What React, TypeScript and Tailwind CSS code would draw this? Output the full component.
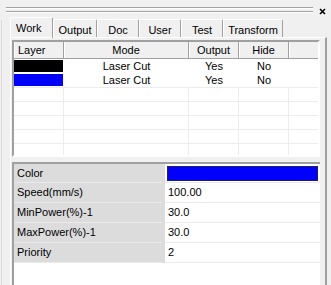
import React from "react";

const tabs: [string, number][] = [
  ["Work", 43],
  ["Output", 44],
  ["Doc", 42],
  ["User", 42],
  ["Test", 42],
  ["Transform", 60],
];

const cols = [50, 125, 50, 50];

function HeaderCell({ w, label, left }: { w: number; label: string; left?: boolean }) {
  return (
    <div
      className={`h-full shrink-0 flex items-center ${left ? "justify-start pl-[4px]" : "justify-center"} border-r border-[#a0a0a0] bg-[#f0f0f0] shadow-[inset_1px_0_0_#ffffff]`}
      style={{ width: w }}
    >
      {label}
    </div>
  );
}

function Row({ swatch, data }: { swatch?: string; data?: boolean }) {
  return (
    <div className={`h-[14px] flex shrink-0 ${data ? "" : "border-b border-[#ececec]"}`}>
      <div className={`shrink-0 ${data ? "" : "border-r border-[#ececec]"} flex items-stretch py-[1px] pr-[1px]`} style={{ width: cols[0] }}>
        {swatch && <div className="w-full" style={{ background: swatch }} />}
      </div>
      <div className={`shrink-0 flex items-center justify-center ${data ? "" : "border-r border-[#ececec]"}`} style={{ width: cols[1] }}>
        {data ? "Laser Cut" : ""}
      </div>
      <div className={`shrink-0 flex items-center justify-center ${data ? "" : "border-r border-[#ececec]"}`} style={{ width: cols[2] }}>
        {data ? "Yes" : ""}
      </div>
      <div className={`shrink-0 flex items-center justify-center ${data ? "" : "border-r border-[#ececec]"}`} style={{ width: cols[3] }}>
        {data ? "No" : ""}
      </div>
      <div className="flex-1" />
    </div>
  );
}

function PropRow({ label, value, color, first }: { label: string; value?: string; color?: string; first?: boolean }) {
  return (
    <div className={`${first ? "h-[19px]" : "h-[20px]"} flex shrink-0`}>
      <div className="w-[148px] shrink-0 bg-[#dcdcdc] border-b border-[#ebebeb] flex items-center pl-[3px]">{label}</div>
      <div className="w-[3px] shrink-0 bg-[#dcdcdc]" />
      <div className={`flex-1 bg-white border-b border-[#ebebeb] flex items-center ${color ? "pl-[2px]" : "pl-[3px]"} pr-[2px]`}>
        {color ? (
          <div className="w-full h-[15px] border border-[#202060]" style={{ background: color }} />
        ) : (
          value
        )}
      </div>
    </div>
  );
}

export default function App() {
  return (
    <div className="w-[331px] h-[285px] bg-[#f0f0f0] overflow-hidden flex flex-col font-['Liberation_Sans',sans-serif] text-[11px] leading-none text-black">
      {/* caption bar */}
      <div className="h-[17px] shrink-0 flex items-start pl-[6px] pr-[5px] pt-[6px] gap-[6px]">
        <div className="flex-1 flex flex-col gap-[2px] pt-[1px]">
          <div className="h-[2px] border-t border-[#a0a0a0] border-b border-b-white" />
          <div className="h-[2px] border-t border-[#a0a0a0] border-b border-b-white" />
        </div>
        <svg width="7" height="7" viewBox="0 0 7 7" className="mt-[2px]">
          <path d="M1 1 L6 6 M6 1 L1 6" stroke="#000" strokeWidth="1.6" />
        </svg>
      </div>
      {/* body */}
      <div className="flex-1 flex min-h-0">
        <div className="w-[10px] shrink-0 flex">
          <div className="w-[1px]" />
          <div className="w-[1px] bg-[#dadada] mt-[3px]" />
        </div>
        <div className="flex-1 flex flex-col min-w-0 pr-[4px]">
          {/* tabs */}
          <div className="h-[20px] shrink-0 flex items-end">
            {tabs.map(([t, w], i) => (
              <div
                key={t}
                className={`shrink-0 flex border-l border-t border-white border-r border-r-[#a0a0a0] rounded-t-[2px] ${
                  i === 0 ? "h-[21px] pt-[5px] relative top-[1px] justify-start pl-[5px]" : "h-[18px] pt-[5px] justify-center"
                }`}
                style={{ width: w }}
              >
                {t}
              </div>
            ))}
          </div>
          {/* panel */}
          <div className="flex-1 flex flex-col border-t border-l border-white border-r-2 border-r-[#a0a0a0] pl-[1px] pr-[5px] pt-[2px] min-h-0">
            {/* list box */}
            <div className="h-[117px] shrink-0 flex flex-col border-2 border-t-[#a0a0a0] border-l-[#a0a0a0] border-r-white border-b-white bg-white overflow-hidden">
              <div className="h-[17px] shrink-0 flex border-b border-[#a0a0a0]">
                <HeaderCell w={cols[0]} label="Layer" left />
                <HeaderCell w={cols[1]} label="Mode" />
                <HeaderCell w={cols[2]} label="Output" />
                <HeaderCell w={cols[3]} label="Hide" />
                <div className="flex-1 bg-[#f0f0f0] shadow-[inset_1px_0_0_#ffffff]" />
              </div>
              <Row swatch="#000000" data />
              <Row swatch="#0000ff" data />
              <div className="h-[1px] shrink-0 border-b border-[#ececec]" />
              <Row />
              <Row />
              <Row />
              <Row />
              <Row />
            </div>
            <div className="h-[5px] shrink-0" />
            {/* property grid */}
            <div className="flex-1 flex flex-col border-t-2 border-l-2 border-[#a0a0a0] bg-white min-h-0">
              <PropRow label="Color" color="#0000ff" first />
              <PropRow label="Speed(mm/s)" value="100.00" />
              <PropRow label="MinPower(%)-1" value="30.0" />
              <PropRow label="MaxPower(%)-1" value="30.0" />
              <PropRow label="Priority" value="2" />
            </div>
          </div>
        </div>
      </div>
    </div>
  );
}
